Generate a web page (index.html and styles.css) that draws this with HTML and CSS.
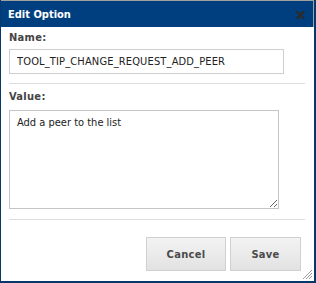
FILE: index.html
```html
<!DOCTYPE html>
<html lang="en">
<head>
    <meta charset="UTF-8">
    <title>Edit Option</title>
    <link rel="stylesheet" href="styles.css">
</head>
<body>

<div class="dialog">
    <div class="titlebar">
        <span class="title">Edit Option</span>
        <svg class="close" width="9" height="8" viewBox="0 0 9 8">
            <path d="M1.5 1 L7.5 7 M7.5 1 L1.5 7" stroke="#2b2b2b" stroke-width="2.4" stroke-linecap="square"/>
        </svg>
    </div>

    <div class="content">
        <label class="label">Name:</label>
        <input class="field" type="text" value="TOOL_TIP_CHANGE_REQUEST_ADD_PEER">

        <div class="sep"></div>

        <label class="label">Value:</label>
        <textarea class="area">Add a peer to the list</textarea>

        <div class="sep"></div>

        <div class="buttons">
            <button class="btn btn-cancel">Cancel</button>
            <button class="btn btn-save">Save</button>
        </div>
    </div>

    <!-- poignée de redimensionnement -->
    <svg class="grip" width="11" height="11" viewBox="0 0 11 11">
        <path d="M10 1 L1 10 M10 4 L4 10 M10 7 L7 10" stroke="#9a9a9a" stroke-width="1"/>
    </svg>
</div>

</body>
</html>
```

FILE: styles.css
```css
/* Style global */
body {
    margin: 0;
    padding: 0;
    background-color: #ffffff;
    font-family: 'DejaVu Sans Condensed', 'DejaVu Sans', sans-serif;
    font-size: 11px;
}

/* Fenêtre */
.dialog {
    position: relative;
    width: 313px;
    height: 281px;
    border-left: 1px solid #06386c;
    border-right: 2px solid #06386c;
    border-bottom: 2px solid #06386c;
    background-color: #ffffff;
}

.titlebar {
    display: flex;
    align-items: center;
    justify-content: space-between;
    height: 26px;
    background-color: #003f7f;
    border-top: 1px solid #a0a0a0;
    border-right: 1px solid #a0a0a0;
    padding: 0 8px 0 7px;
}

.title {
    color: #ffffff;
    font-weight: bold;
    font-size: 11px;
}

.close {
    display: block;
    margin-top: 2px;
}

/* Contenu */
.content {
    padding: 4px 9px 0 8px;
    display: flex;
    flex-direction: column;
}

.label {
    color: #444444;
    font-weight: bold;
    line-height: 14px;
    letter-spacing: 0.3px;
}

.field {
    box-sizing: border-box;
    width: 275px;
    height: 25px;
    margin: 4px 0 0 0;
    padding: 0 7px;
    border: 1px solid #cfcfcf;
    font-family: inherit;
    font-size: 11px;
    letter-spacing: 0.15px;
    color: #222222;
    outline: none;
}

.sep {
    height: 1px;
    background-color: #dddddd;
    margin: 9px 0 6px 0;
}

.area {
    box-sizing: border-box;
    width: 270px;
    height: 99px;
    margin: 6px 0 0 0;
    padding: 5px 7px;
    border: 1px solid #c4c4c4;
    font-family: inherit;
    font-size: 11px;
    color: #222222;
    resize: both;
    outline: none;
}

.area + .sep {
    margin-top: 10px;
}

/* Boutons */
.buttons {
    display: flex;
    justify-content: flex-end;
    gap: 4px;
    margin-top: 11px;
    padding-right: 4px;
}

.btn {
    height: 34px;
    border: 1px solid #d0d0d0;
    background: linear-gradient(#f3f3f3, #e2e2e2);
    color: #4a4a4a;
    font-family: inherit;
    font-size: 11px;
    font-weight: bold;
    letter-spacing: 0.3px;
    padding: 0;
}

.btn-cancel {
    width: 80px;
}

.btn-save {
    width: 71px;
}

.grip {
    position: absolute;
    right: 1px;
    bottom: 1px;
}
```
